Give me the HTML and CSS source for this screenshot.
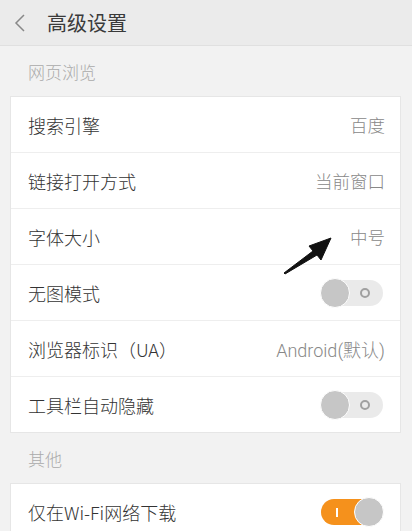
FILE: index.html
```html
<!DOCTYPE html>
<html lang="zh-CN">
<head>
<meta charset="utf-8">
<title>高级设置</title>
<link rel="stylesheet" href="styles.css">
</head>
<body>
<div class="page">
  <header class="topbar">
    <svg class="back" width="14" height="20" viewBox="0 0 14 20"><path d="M11 2 L3 10 L11 18" fill="none" stroke="#888" stroke-width="1.5"/></svg>
    <span class="title">高级设置</span>
  </header>
  <div class="section-label">网页浏览</div>
  <div class="card">
    <div class="row"><span class="label">搜索引擎</span><span class="value">百度</span></div>
    <div class="row"><span class="label">链接打开方式</span><span class="value">当前窗口</span></div>
    <div class="row"><span class="label">字体大小</span><span class="value">中号</span></div>
    <div class="row"><span class="label">无图模式</span><span class="toggle off"><span class="knob"></span><span class="ring"></span></span></div>
    <div class="row"><span class="label">浏览器标识（UA）</span><span class="value ua">Android(默认)</span></div>
    <div class="row"><span class="label">工具栏自动隐藏</span><span class="toggle off"><span class="knob"></span><span class="ring"></span></span></div>
  </div>
  <div class="section-label">其他</div>
  <div class="card">
    <div class="row"><span class="label">仅在Wi-Fi网络下载</span><span class="toggle on"><span class="bar"></span><span class="knob"></span></span></div>
  </div>
  <svg class="arrow" width="56" height="44" viewBox="0 0 56 44">
    <path d="M4 39 L33 17 L29 12 L51 4 L41 26 L37 21 L5 40 Z" fill="#111" stroke="#111" stroke-width="1" stroke-linejoin="round"/>
  </svg>
</div>
</body>
</html>
```
FILE: styles.css
```css
* { box-sizing: border-box; }
html, body { margin: 0; padding: 0; }
body {
  background: #f2f2f2;
  font-family: "Noto Sans CJK SC", "Roboto", sans-serif;
  width: 412px;
  height: 531px;
  overflow: hidden;
}
.page { position: relative; }
.topbar {
  height: 46px;
  background: #ebebeb;
  border-bottom: 1px solid #e0e0e0;
  display: flex;
  align-items: center;
  padding-left: 13px;
}
.back { margin-right: 20px; margin-top: 1px; }
.title { font-size: 20px; color: #3a3a3a; line-height: 1; }
.section-label {
  height: 50px;
  display: flex;
  align-items: center;
  padding-left: 28px;
  font-size: 17px;
  font-weight: 300;
  color: #aaaaaa;
}
.card {
  margin: 0 11px 0 10px;
  background: #fff;
  border: 1px solid #e6e6e6;
}
.row {
  height: 56px;
  display: flex;
  align-items: center;
  justify-content: space-between;
  padding: 0 15px 0 17px;
  border-top: 1px solid #eeeeee;
}
.row:first-child { border-top: none; height: 55px; }
.label { font-size: 18px; font-weight: 300; color: #333; }
.value { font-size: 17.5px; font-weight: 300; color: #888; }
.value.ua { font-family: "Roboto", "Noto Sans CJK SC", sans-serif; font-size: 18px; }
.toggle {
  position: relative;
  width: 62px;
  height: 26px;
  border-radius: 13px;
  margin-right: 2px;
}
.toggle.off { background: #eaeaea; }
.toggle.on { background: #f5911c; }
.knob {
  position: absolute;
  top: -2px;
  width: 30px;
  height: 30px;
  border-radius: 50%;
  background: #c6c6c6;
  border: 1px solid #fff;
}
.toggle.off .knob { left: -1px; }
.toggle.on .knob { right: -1px; }
.ring {
  position: absolute;
  left: 39px;
  top: 8px;
  width: 10px;
  height: 10px;
  border-radius: 50%;
  border: 2px solid #a0a0a0;
}
.bar {
  position: absolute;
  left: 15px;
  top: 9px;
  width: 2px;
  height: 9px;
  background: #fff;
}
.arrow {
  position: absolute;
  left: 280px;
  top: 234px;
}
```
